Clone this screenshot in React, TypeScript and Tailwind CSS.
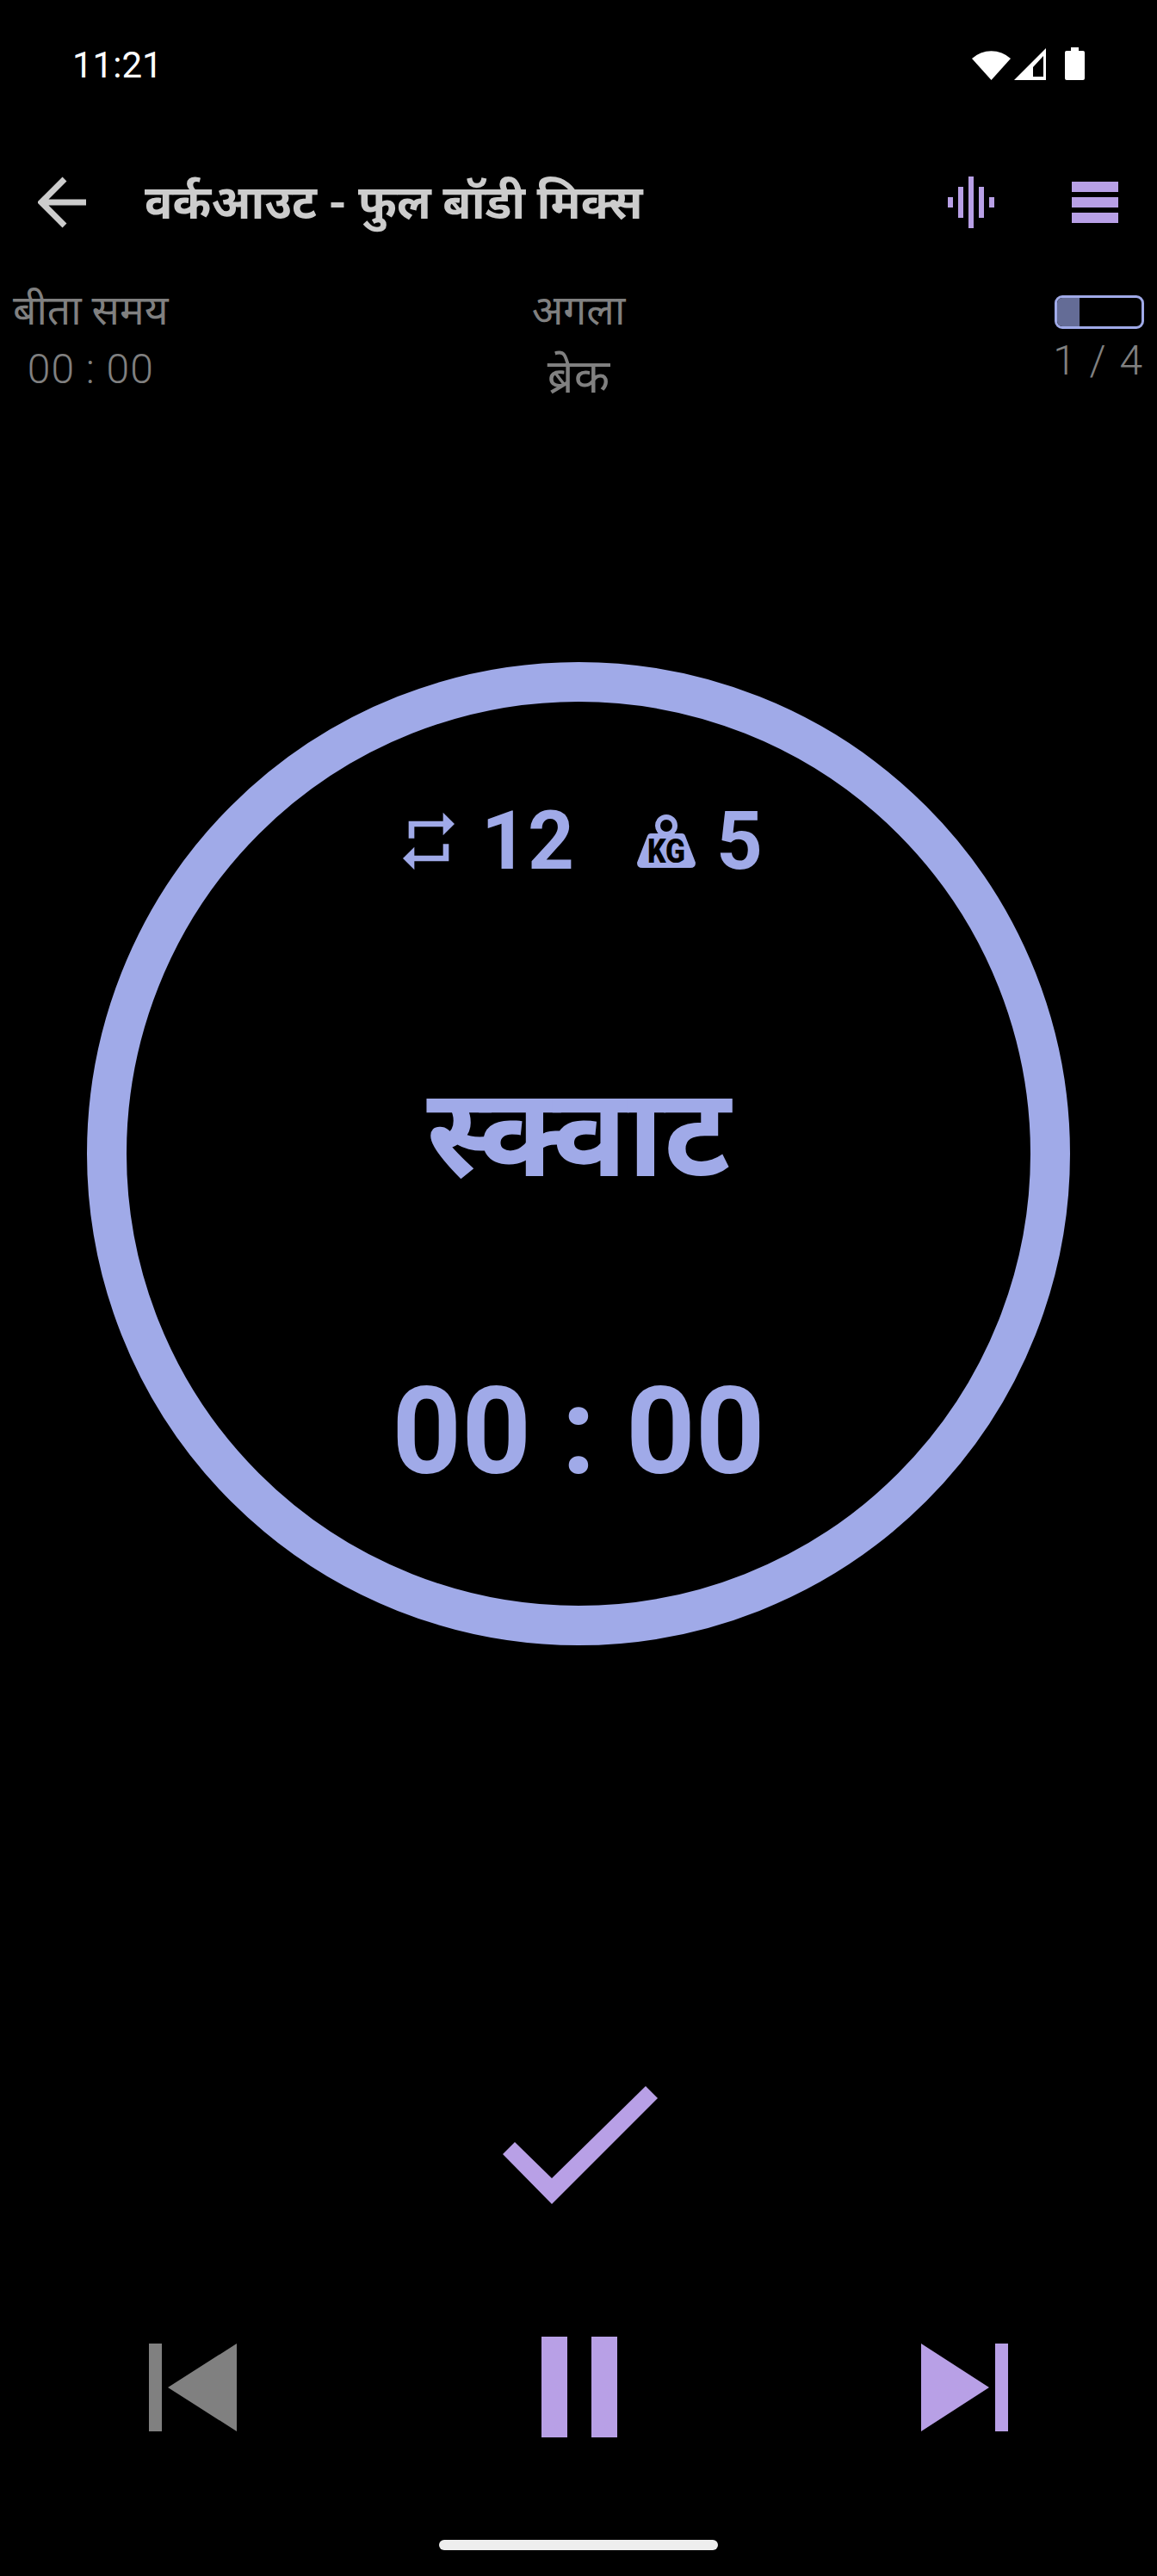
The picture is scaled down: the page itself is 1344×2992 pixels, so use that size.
const lilac = "#b8a0e6";

function StatusIcons() {
  return (
    <div className="flex items-center">
      <svg width="45" height="38" viewBox="0 0 45 38" className="block">
        <path d="M0 13 A 33 33 0 0 1 45 13 L22.5 38 Z" fill="#fff" />
      </svg>
      <svg width="37" height="37" viewBox="0 0 37 37" className="block ml-[4px]">
        <path fillRule="evenodd" d="M37 0 V37 H0 Z M34 9 L22 22 V33 H34 Z" fill="#fff" />
      </svg>
      <svg width="23" height="38" viewBox="0 0 23 38" className="block ml-[22px]">
        <path d="M7 0 H16 V4 H21 Q23 4 23 6 V36 Q23 38 21 38 H2 Q0 38 0 36 V6 Q0 4 2 4 H7 Z" fill="#fff" />
      </svg>
    </div>
  );
}

function RepeatIcon() {
  return (
    <svg width="80" height="80" viewBox="0 0 24 24" className="block">
      <path d="M7 7h10v3l4-4-4-4v3H5v6h2V7zm10 10H7v-3l-4 4 4 4v-3h12v-6h-2v4z" fill="#a0aae8" />
    </svg>
  );
}

function WeightIcon() {
  return (
    <svg width="68" height="62" viewBox="0 0 68 62" className="block overflow-visible">
      <circle cx="34" cy="13" r="10" fill="none" stroke="#a0aae8" strokeWidth="6" />
      <path d="M16 22 H52 Q55 22 56 25 L68 56 Q68 62 62 62 H6 Q0 62 0 56 L12 25 Q13 22 16 22 Z" fill="#a0aae8" />
      <text x="34" y="56" textAnchor="middle" textLength="44" lengthAdjust="spacingAndGlyphs" fontFamily="Roboto" fontWeight="900" fontSize="39" fill="#000">KG</text>
    </svg>
  );
}

export default function App() {
  return (
    <div className="w-[1344px] h-[2992px] bg-black flex flex-col overflow-hidden font-['Roboto','Noto_Sans',sans-serif]">
      <div className="h-[148px] flex items-center justify-between pl-[84px] pr-[84px]">
        <span className="mt-[3px] text-[42px] text-white">11:21</span>
        <StatusIcons />
      </div>

      <div className="h-[174px] flex items-center pl-[44px] pr-[45px]">
        <svg width="58" height="60" viewBox="0 0 58 60" className="block">
          <path d="M56 30 H4 M31 3 L4 30 L31 57" fill="none" stroke="#cccccc" strokeWidth="7" />
        </svg>
        <h1 className="ml-[66px] flex-1 text-[54px] font-bold text-[#cccccc]">वर्कआउट - फुल बॉडी मिक्स</h1>
        <svg width="54" height="60" viewBox="0 0 54 60" className="block">
          <path d="M0 24h6v12H0zM12 12h6v36h-6zM24 0h6v60h-6zM36 12h6v36h-6zM48 24h6v12h-6z" fill={lilac} />
        </svg>
        <div className="ml-[90px] w-[54px] flex flex-col gap-[6px]">
          <div className="h-[12px]" style={{ backgroundColor: lilac }} />
          <div className="h-[12px]" style={{ backgroundColor: lilac }} />
          <div className="h-[12px]" style={{ backgroundColor: lilac }} />
        </div>
      </div>

      <div className="grid grid-cols-[1fr_auto_1fr] px-[15px] text-[#808080]">
        <div className="justify-self-start flex flex-col items-center">
          <span className="text-[48px] leading-[78px]">बीता समय</span>
          <span className="text-[48px] leading-[58px] font-light tracking-[1px]">00 : 00</span>
        </div>
        <div className="flex flex-col items-center">
          <span className="text-[48px] leading-[78px]">अगला</span>
          <span className="text-[54px] leading-[76px]">ब्रेक</span>
        </div>
        <div className="justify-self-end flex flex-col items-end">
          <div className="mt-[21px] w-[104px] h-[39px] rounded-[9px] border-[3px] border-[#a0aae8] overflow-hidden">
            <div className="w-[26px] h-full bg-[#646c96]" />
          </div>
          <span className="mt-[10px] text-[48px] leading-[54px] font-light tracking-[2px]">1 / 4</span>
        </div>
      </div>

      <div className="mt-[293px] mx-auto w-[1142px] h-[1142px] shrink-0 rounded-full border-[46px] border-[#a0aae8] flex flex-col items-center text-[#a0aae8]">
        <div className="mt-[112px] flex items-center font-bold text-[94px] leading-[100px]">
          <RepeatIcon />
          <span className="ml-[21px]">12</span>
          <div className="ml-[73px]"><WeightIcon /></div>
          <span className="ml-[24px]">5</span>
        </div>
        <div className="mt-[200px] text-[144px] leading-[180px] font-bold">स्क्वाट</div>
        <div className="mt-[181px] text-[141px] leading-[150px] font-bold">00 : 00</div>
      </div>

      <svg width="180" height="137" viewBox="584 2423 180 137" className="block shrink-0 mt-[512px] ml-[584px]">
        <path d="M750 2423 L764 2437 L641 2560 L584 2502 L598 2488 L641 2530 Z" fill={lilac} />
      </svg>

      <div className="mt-[154px] flex items-center justify-between pl-[173px] pr-[173px]">
        <svg width="102" height="102" viewBox="0 0 102 102" className="block">
          <path d="M0 0h15v102H0zM102 0v102L22 51z" fill="#808080" />
        </svg>
        <div className="flex gap-[28px]">
          <div className="w-[30px] h-[117px]" style={{ backgroundColor: lilac }} />
          <div className="w-[30px] h-[117px]" style={{ backgroundColor: lilac }} />
        </div>
        <svg width="101" height="102" viewBox="0 0 101 102" className="block">
          <path d="M0 0v102l79-51zM86 0h15v102H86z" fill={lilac} />
        </svg>
      </div>

      <div className="mt-[119px] mx-auto w-[324px] h-[12px] shrink-0 rounded-full bg-[#eeeeee]" />
    </div>
  );
}
